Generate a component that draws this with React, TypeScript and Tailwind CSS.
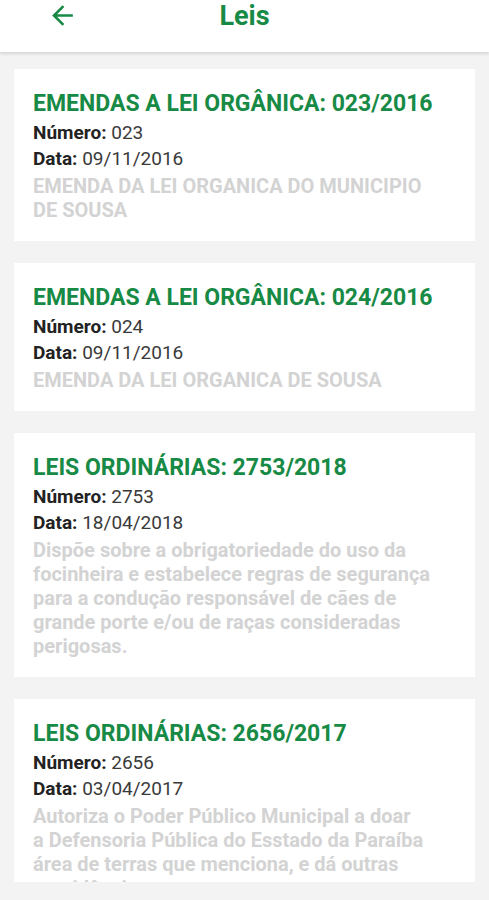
import React from "react";

type Lei = { title: string; numero: string; data: string; desc: string[] };

const leis: Lei[] = [
  {
    title: "EMENDAS A LEI ORGÂNICA: 023/2016",
    numero: "023",
    data: "09/11/2016",
    desc: ["EMENDA DA LEI ORGANICA DO MUNICIPIO", "DE SOUSA"],
  },
  {
    title: "EMENDAS A LEI ORGÂNICA: 024/2016",
    numero: "024",
    data: "09/11/2016",
    desc: ["EMENDA DA LEI ORGANICA DE SOUSA"],
  },
  {
    title: "LEIS ORDINÁRIAS: 2753/2018",
    numero: "2753",
    data: "18/04/2018",
    desc: [
      "Dispõe sobre a obrigatoriedade do uso da",
      "focinheira e estabelece regras de segurança",
      "para a condução responsável de cães de",
      "grande porte e/ou de raças consideradas",
      "perigosas.",
    ],
  },
  {
    title: "LEIS ORDINÁRIAS: 2656/2017",
    numero: "2656",
    data: "03/04/2017",
    desc: [
      "Autoriza o Poder Público Municipal a doar",
      "a Defensoria Pública do Esstado da Paraíba",
      "área de terras que menciona, e dá outras",
      "providências.",
    ],
  },
];

function Card({ lei }: { lei: Lei }) {
  return (
    <div className="bg-white px-[19px] pt-[21px] pb-[19px] shrink-0">
      <div className="text-[23px] leading-[28px] font-bold text-[#178a45] whitespace-nowrap">
        {lei.title}
      </div>
      <div className="mt-[2px] text-[19px] leading-[26px] text-[#3a3a3a]">
        <span className="font-bold text-[#222222]">Número:</span> {lei.numero}
      </div>
      <div className="text-[19px] leading-[26px] text-[#3a3a3a]">
        <span className="font-bold text-[#222222]">Data:</span> {lei.data}
      </div>
      <div className="mt-[2px] text-[20px] leading-[24px] font-bold text-[#d3d3d3]">
        {lei.desc.map((l, i) => (
          <div key={i} className="whitespace-nowrap">
            {l}
          </div>
        ))}
      </div>
    </div>
  );
}

export default function App() {
  return (
    <div
      className="w-[489px] h-[900px] flex flex-col bg-[#f3f3f3] overflow-hidden"
      style={{ fontFamily: "Roboto, 'Noto Sans', sans-serif" }}
    >
      <div className="relative z-10 h-[52px] shrink-0 bg-white shadow-[0_2px_3px_rgba(0,0,0,0.12)] flex items-start">
        <div className="w-[47px] shrink-0" />
        <svg
          width="31"
          height="31"
          viewBox="0 0 24 24"
          className="shrink-0"
          fill="#178a45"
        >
          <path d="M20 11H7.83l5.59-5.59L12 4l-8 8 8 8 1.41-1.41L7.83 13H20v-2z" />
        </svg>
        <div className="flex-1 text-center pr-[78px] text-[27px] leading-[32px] font-bold text-[#178a45]">
          Leis
        </div>
      </div>
      <div className="h-[830px] shrink-0 overflow-hidden px-[14px] pt-[17px] flex flex-col gap-[22px]">
        {leis.map((l, i) => (
          <Card key={i} lei={l} />
        ))}
      </div>
    </div>
  );
}
